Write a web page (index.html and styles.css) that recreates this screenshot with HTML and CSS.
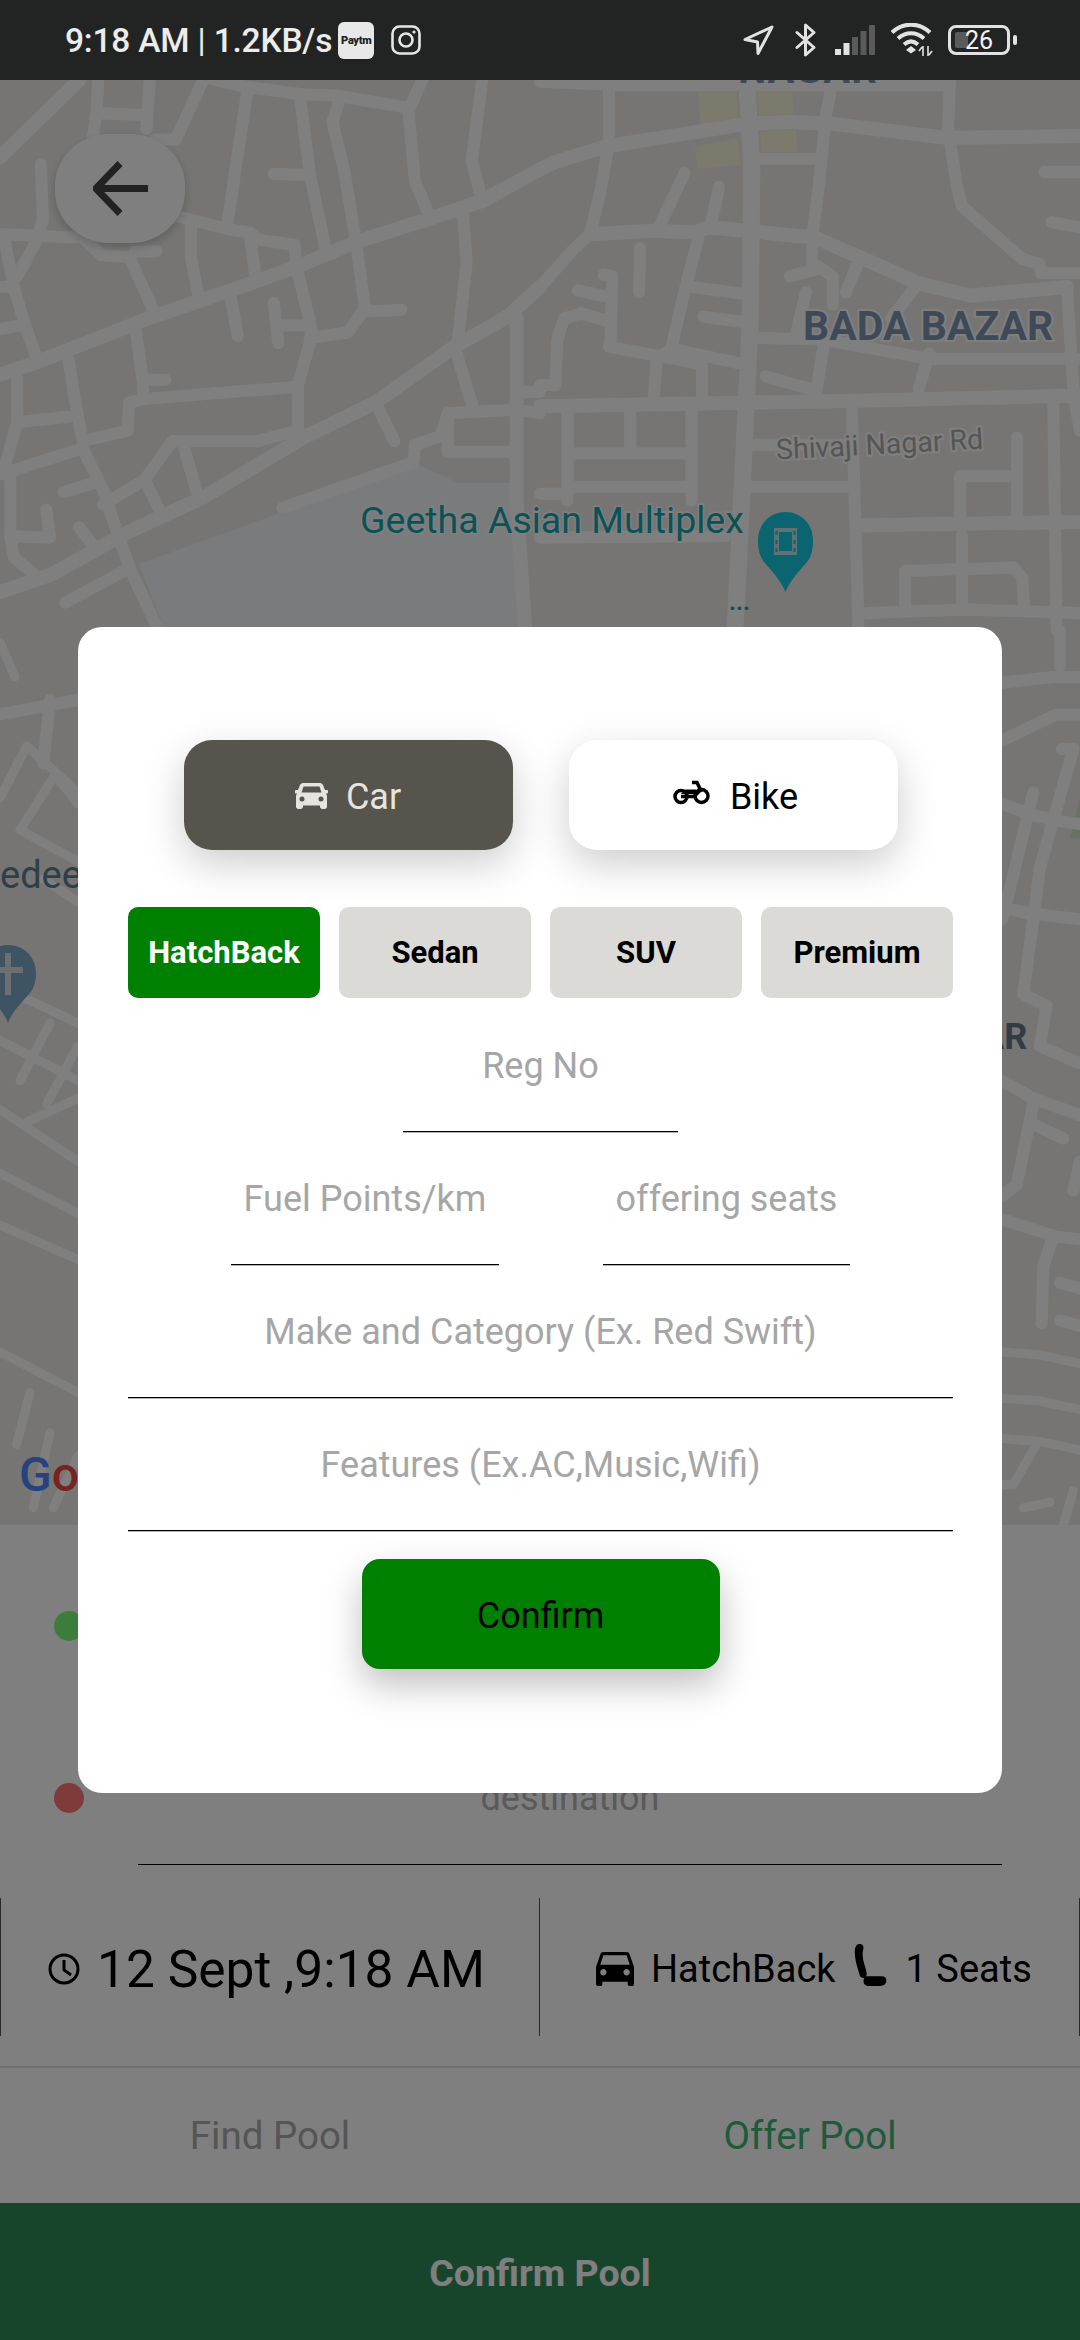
FILE: index.html
```html
<!DOCTYPE html>
<html lang="en">
<head>
<meta charset="utf-8">
<title>Offer Pool</title>
<link rel="stylesheet" href="styles.css">
</head>
<body>
<div class="phone">
  <header class="status">
    <div class="status-left">
      <span class="clock-text">9:18 AM <i>|</i> 1.2KB/s</span>
      <span class="paytm">Paytm</span>
      <svg class="insta" viewBox="0 0 30 30"><rect x="1.5" y="1.5" width="27" height="27" rx="7"/><circle cx="15" cy="15" r="6.5"/><circle class="solid" cx="23" cy="7" r="1.6"/></svg>
    </div>
    <div class="status-right">
      <svg class="si nav" viewBox="0 0 31 30"><path d="M29 2 2 14.500 14.500 17 15 28.500Z"/></svg>
      <svg class="si bt" viewBox="0 0 22 34"><path d="M2 9.500 19 24.500 10.500 32V2L19 9.500 2 24.500"/></svg>
      <svg class="signal" viewBox="0 0 40 30"><rect class="on" x="0" y="24" width="6" height="6"/><rect class="on" x="8.500" y="18" width="6" height="12"/><rect x="17" y="12" width="6" height="18"/><rect x="25.500" y="6" width="6" height="24"/><rect x="34" y="0" width="6" height="30"/></svg>
      <svg class="wifi" viewBox="0 0 44 34"><path d="M2 9.500C13 -1 29 -1 40 9.500M8 15.500C15.500 8.500 26.500 8.500 34 15.500M14 21.500C18.500 17.500 23.500 17.500 28 21.500"/><path class="solid" d="M21 23 26 27 21 30.500 16 27Z"/><path class="arrows" d="M33 23V33M32 24l-3 4M38 33V23M39 32l3-4"/></svg>
      <span class="battery"><span class="battery-fill"></span><span class="battery-num">26</span></span>
    </div>
  </header>

  <section class="map">
    <svg class="roads" viewBox="0 0 1080 1445">
      <polygon class="water" points="139,484 286,431 417,384 458,403 513,403 513,463 520,550 165,550"/>
      <g class="park">
        <polygon points="698,12 736,9 739,46 701,46"/>
        <polygon points="757,7 792,5 794,34 759,36"/>
        <polygon points="760,52 796,50 797,72 762,72"/>
        <polygon points="695,67 738,58 740,85 698,89"/>
        <polygon points="1070,758 1080,718 1080,758"/>
      </g>
      <g transform="scale(.3444 .3507)">
        <polyline class="wide" points="0,840 120,800 430,680 700,590 880,525 1040,460 1280,385 1400,345 1568,255"/>
        <polyline points="600,-5 720,20 870,40 980,45 1190,80 1230,-10"/>
        <polyline points="720,20 660,410"/>
        <polyline points="285,0 280,95 270,160"/>
        <polyline points="435,0 425,140"/><polyline points="280,95 425,100"/>
        <polyline points="590,0 510,170 450,170"/>
        <polyline class="wide" points="230,0 0,220"/>
        <polyline points="870,40 900,270 945,480"/><polyline points="900,270 795,268"/>
        <polyline points="985,60 965,120 1000,260 1030,440 1060,650 1010,720 900,735"/><polyline points="1060,660 1165,655"/>
        <polyline points="1185,80 1205,290 1240,370"/><polyline points="1400,0 1370,230 1395,325"/>
        <polyline points="118,240 125,400 100,470 50,560"/>
        <polyline points="0,440 240,450 295,500 375,505 445,655"/><polyline points="390,490 455,488"/>
        <polyline points="520,390 660,425 725,435 750,455 855,470 860,525"/><polyline points="725,440 740,550"/>
        <polyline points="555,420 555,510 575,610"/>
        <polyline points="860,530 900,690 905,730 865,870 865,1000"/><polyline points="795,635 808,750"/>
        <polyline points="815,700 900,700"/><polyline points="670,620 690,730"/>
        <polyline points="395,720 415,860 415,900"/><polyline points="415,855 480,855"/>
        <polyline points="860,875 415,910 375,920 370,1000 240,1030 215,900 200,800"/>
        <polyline points="50,850 50,975 200,960"/><polyline points="50,975 15,1100"/>
        <polyline points="0,1125 240,1050 300,1170 340,1290 380,1400 460,1568"/>
        <polyline class="wide" points="1568,590 1480,670 1430,700 1320,760 1090,920 880,1020 590,1190 370,1290 150,1410 0,1460"/>
        <polyline points="1320,760 1375,940"/><polyline points="1345,390 1355,520 1330,740"/>
        <polyline points="860,1000 745,1030 500,1030 420,1140 300,1210"/><polyline points="535,1050 570,1170"/>
        <polyline points="420,1140 460,1220"/><polyline points="185,1175 270,1150"/>
        <polyline points="820,1220 1200,1090 1205,1040 1280,1015 1300,950 1500,940 1568,950"/>
        <polyline points="1095,930 1145,1030"/><polyline points="1300,950 1300,1060 1500,1060"/>
        <polyline class="wide" points="1500,680 1500,1200 1525,1568"/>
        <polyline points="0,590 40,590 70,690 105,790"/><polyline points="0,710 60,700"/><polyline points="10,440 40,590"/>
        <polyline points="135,1225 145,1305 30,1300"/><polyline points="30,1130 30,1300 40,1360 100,1410"/>
        <polyline points="230,1275 280,1340"/><polyline points="190,1490 370,1395"/>
        <polyline points="1500,890 1568,890"/>
      </g>
      <g transform="translate(540 0) scale(.3444 .3507)">
        <polyline class="wide" points="0,255 40,235 190,190 600,125 720,120 850,125 1180,165 1568,160"/>
        <polyline class="wider" points="600,0 615,250 610,700 595,1000 570,1500 565,1568"/>
        <polyline points="200,20 200,180 175,320 145,440 100,480 0,590"/>
        <polyline points="0,5 250,15 1190,15"/>
        <polyline points="850,0 830,100 810,300 790,450"/>
        <polyline points="1190,0 1185,140 1210,300 1225,360 1400,510 1450,525 1455,550 1568,550"/>
        <polyline class="wide" points="145,440 330,430 450,435 490,420 600,430 800,450 940,510 1100,580 1250,615 1530,590"/>
        <polyline points="420,265 340,430"/><polyline points="520,305 495,420"/>
        <polyline points="625,225 800,225"/><polyline points="1465,262 1568,262"/><polyline points="1485,405 1568,420"/>
        <polyline points="290,480 288,605"/>
        <polyline points="460,450 420,600 380,770 340,790 330,910"/>
        <polyline points="185,555 210,560 205,740 200,760 470,810 470,920"/>
        <polyline points="110,600 205,620"/>
        <polyline points="0,870 45,870 50,740 70,680 120,665 205,690"/>
        <polyline points="440,590 590,610"/><polyline points="475,675 590,690"/><polyline points="400,770 590,810"/>
        <polyline class="wide" points="0,930 600,920 890,915 1568,900"/>
        <polyline points="790,480 790,520 850,560 850,640"/><polyline points="725,560 800,540"/><polyline points="772,605 745,720"/>
        <polyline points="620,735 820,740 1130,795 1568,795"/><polyline points="825,750 800,900"/><polyline points="655,845 800,885"/>
        <polyline points="1100,880 1130,780"/><polyline points="888,605 920,530"/><polyline points="1090,590 1020,680"/>
        <polyline points="1530,590 1550,900 1568,1000"/>
        <polyline points="80,950 80,1200"/><polyline points="262,950 262,1060"/><polyline points="440,950 440,1200"/>
        <polyline points="80,1065 440,1065"/><polyline points="80,1160 440,1160"/><polyline points="0,1180 80,1180"/>
        <polyline points="905,920 915,1240 925,1568"/><polyline points="600,1040 900,1040"/><polyline points="590,1160 910,1160"/>
        <polyline class="wide" points="920,1270 1568,1260"/><polyline points="1490,910 1500,1568"/>
        <polyline points="1385,1020 1385,1250"/><polyline points="1220,1240 1220,1130 1380,1130"/><polyline points="1225,1300 1225,1490"/>
        <polyline points="1060,1500 1060,1400 1375,1390 1400,1420 1405,1490"/>
        <polyline points="950,1520 1240,1510 1568,1520"/><polyline points="0,1305 540,1300"/>
      </g>
      <g transform="translate(0 545) scale(.3333 .577)">
        <polyline class="thin" points="0,30 45,90"/><polyline points="0,155 234,130"/>
        <polyline points="150,130 130,240"/>
        <polyline class="thin" points="0,300 80,210 234,290"/>
        <polyline class="thin" points="60,355 165,260 234,310"/><polyline class="thin" points="60,355 234,410"/>
        <polyline class="thin" points="130,440 234,480"/>
        <polyline class="thin" points="50,640 234,690"/>
        <polyline class="thin" points="0,720 234,790"/><polyline class="thin" points="60,790 150,690"/>
        <polyline class="thin" points="140,830 234,730"/><polyline class="thin" points="85,860 234,820"/>
        <polyline class="thin" points="0,840 234,930"/><polyline class="thin" points="0,950 234,1020"/><polyline class="thin" points="0,1040 234,1100"/>
        <polyline class="thin" points="0,1260 234,1330"/><polyline class="thin" points="90,1330 50,1420"/>
        <polyline class="thin" points="100,1530 150,1400"/><polyline class="thin" points="160,1530 234,1440"/>
      </g>
      <g transform="translate(990 545) scale(.3333 .577)">
        <polyline points="36,100 190,90 270,90"/><polyline points="210,10 210,70"/>
        <polyline points="36,200 200,155 270,155"/>
        <polyline points="215,215 250,215 150,420 100,640 170,660 150,730 270,760"/>
        <polyline points="36,310 130,330 210,340"/><polyline points="130,290 50,480 36,510"/>
        <polyline points="36,490 120,500 270,510"/><polyline points="210,340 270,345"/>
        <polyline points="36,790 130,820 270,850"/><polyline points="130,830 80,970 36,990"/>
        <polyline points="130,865 220,890"/><polyline points="250,980 270,930"/>
        <polyline points="36,1030 200,1060 270,1065"/><polyline points="190,1060 160,1110 155,1210"/>
        <polyline points="210,1140 270,1150"/><polyline points="210,1205 270,1215"/>
        <polyline class="thin" points="36,1260 150,1265 270,1280"/><polyline class="thin" points="36,1340 150,1345 270,1360"/>
        <polyline class="thin" points="36,1410 150,1415 270,1430"/><polyline class="thin" points="140,1420 70,1490 36,1490"/>
        <polyline class="thin" points="100,1530 180,1520"/><polyline class="thin" points="250,1500 220,1560"/>
      </g>
    </svg>

    <span class="label label-top">NAGAR</span>
    <span class="label label-bada">BADA BAZAR</span>
    <span class="label label-bada-2">AR</span>
    <span class="label label-road">Shivaji Nagar Rd</span>
    <span class="label label-poi">Geetha Asian Multiplex</span>
    <span class="label label-dots">...</span>
    <span class="label label-edee">edee</span>
    <span class="label label-google"><b class="g-blue">G</b><b class="g-red">o</b><b class="g-yellow">o</b></span>
    <svg class="pin pin-film" viewBox="0 0 55 80"><path class="pin-body" d="M27.500 80 C24 70 13 58 6 50 C2 45 0 38 0 28 C0 12 12 0 27.500 0 C43 0 55 12 55 28 C55 38 53 45 49 50 C42 58 31 70 27.500 80Z"/><path class="pin-mark" fill-rule="evenodd" d="M16 16H39V43H16ZM21 20V39H34V20ZM17.500 19V23H19.500V19ZM35.500 19V23H37.500V19ZM17.500 28V32H19.500V28ZM35.500 28V32H37.500V28ZM17.500 36V40H19.500V36ZM35.500 36V40H37.500V36Z"/></svg>
    <svg class="pin pin-church" viewBox="0 0 56 78"><path class="pin-body-dark" d="M28 78 C25 68 13 56 6 48 C2 43 0 36 0 28 C0 12 12 0 28 0 C44 0 56 12 56 28 C56 36 54 43 50 48 C43 56 31 68 28 78Z"/><path class="pin-cross" d="M25 8H31V22H43V28H31V50H25V28H13V22H25Z"/></svg>

    <button class="back" type="button" aria-label="Back">
      <svg viewBox="0 0 55 55"><path d="M27 2.500 3 27.500 27 52.500M3 27.500H55"/></svg>
    </button>
  </section>

  <section class="sheet">
    <div class="place place-first">
      <span class="dot dot-green"></span>
      <div class="place-field">source</div>
    </div>
    <div class="place">
      <span class="dot dot-red"></span>
      <div class="place-field">destination</div>
    </div>
    <div class="info">
      <div class="cell cell-time">
        <svg class="clock" viewBox="0 0 32 34"><circle cx="16" cy="17" r="14"/><path d="M16 8V18L23 23"/></svg>
        <span>12 Sept ,9:18 AM</span>
      </div>
      <div class="cell cell-ride">
        <svg class="car-solid" viewBox="3 5 18 16" preserveAspectRatio="none"><path d="M18.920 6.010C18.720 5.420 18.160 5 17.500 5h-11c-.66 0-1.210.42-1.420 1.010L3 12v8c0 .55.45 1 1 1h1c.55 0 1-.45 1-1v-1h12v1c0 .55.45 1 1 1h1c.55 0 1-.45 1-1v-8l-2.080-5.990zM6.500 16c-.83 0-1.500-.67-1.500-1.500S5.670 13 6.500 13s1.500.67 1.500 1.500S7.330 16 6.500 16zm11 0c-.83 0-1.500-.67-1.500-1.500s.67-1.500 1.500-1.500 1.500.67 1.500 1.500-.67 1.500-1.500 1.500zM5 11l1.500-4.500h11L19 11H5z"/></svg>
        <span>HatchBack</span>
        <svg class="seat" viewBox="870 128 105 132"><path d="M885 132C878 135 874 145 876 165C878 190 885 205 890 225C893 235 905 235 910 228C915 215 900 190 899 165C898 150 904 145 900 136C897 130 890 130 885 132Z"/><path d="M912 228H955C965 228 970 232 970 240C970 250 965 257 950 257H918C905 257 900 248 902 238C903 232 906 228 912 228Z"/></svg>
        <span>1 Seats</span>
      </div>
    </div>
    <nav class="tabs">
      <span class="tab">Find Pool</span>
      <span class="tab tab-active">Offer Pool</span>
    </nav>
    <div class="confirm-bar">Confirm Pool</div>
  </section>

  <div class="overlay"></div>

  <div class="modal">
    <div class="toggle">
      <div class="toggle-btn toggle-on">
        <svg class="car-icon" viewBox="0 0 33 27"><path fill-rule="evenodd" d="M8 1H25C26.500 1 27.500 2 28 3L30 8H32C32.600 8 33 8.500 33 9V10.500C33 11 32.600 11.500 32 11.500H30.800C31.600 12.300 32 13.300 32 14.500V24.500C32 25.800 31 27 29.500 27H27.500C26 27 25 25.800 25 24.500V23.500H8V24.500C8 25.800 7 27 5.500 27H3.500C2 27 1 25.800 1 24.500V14.500C1 13.300 1.400 12.300 2.200 11.500H1C.4 11.500 0 11 0 10.500V9C0 8.500 .4 8 1 8H3L5 3C5.500 2 6.500 1 8 1ZM8.500 4.500 6.500 10.500H26.500L24.500 4.500ZM7 14.500A2.500 2.500 0 1 0 7 19.500A2.500 2.500 0 1 0 7 14.500ZM26 14.500A2.500 2.500 0 1 0 26 19.500A2.500 2.500 0 1 0 26 14.500Z"/></svg>
        <span>Car</span>
      </div>
      <div class="toggle-btn toggle-bike">
        <svg class="bike-icon" viewBox="0 0 37 25"><circle cx="8" cy="16.500" r="6"/><circle cx="28.500" cy="16" r="6.500"/><path d="M8 16.500H21L28.500 9M19 2.500H24L28.500 12"/><path d="M12 9.500H23V14H8Z" class="fill"/></svg>
        <span>Bike</span>
      </div>
    </div>

    <div class="chips">
      <div class="chip chip-on">HatchBack</div>
      <div class="chip">Sedan</div>
      <div class="chip">SUV</div>
      <div class="chip">Premium</div>
    </div>

    <div class="field field-reg">Reg No</div>
    <div class="field-row">
      <div class="field field-fuel">Fuel Points/km</div>
      <div class="field field-seats">offering seats</div>
    </div>
    <div class="field">Make and Category (Ex. Red Swift)</div>
    <div class="field">Features (Ex.AC,Music,Wifi)</div>

    <div class="modal-confirm">Confirm</div>
  </div>
</div>
</body>
</html>
```
FILE: styles.css
```css
* { box-sizing: border-box; }
html, body { margin: 0; padding: 0; }
body { font-family: Roboto, "Liberation Sans", sans-serif; background: #fff; }

.phone {
  position: relative;
  width: 1080px;
  height: 2340px;
  overflow: hidden;
  display: flex;
  flex-direction: column;
}

/* status bar */
.status {
  position: relative;
  z-index: 3;
  flex: 0 0 80px;
  background: #222423;
  color: #ececec;
  display: flex;
  align-items: center;
  justify-content: space-between;
  padding: 0 64px 0 65px;
}
.status-left, .status-right { display: flex; align-items: center; }
.clock-text { font-size: 33.500px; font-weight: 500; white-space: nowrap; margin-right: 6px; letter-spacing: -.2px; }
.clock-text i { font-style: normal; font-weight: 400; }
.paytm {
  width: 36px; height: 37px;
  border-radius: 6px;
  background: #e8e8e8;
  color: #222;
  font-size: 11px;
  font-weight: 900;
  letter-spacing: -.3px;
  display: flex; align-items: center; justify-content: center;
  margin-right: 17px;
}
.insta { width: 30px; height: 30px; fill: none; stroke: #e6e6e6; stroke-width: 2.6; }
.insta .solid { fill: #e6e6e6; stroke: none; }
.si { fill: none; stroke: #e2e2e2; stroke-width: 3; stroke-linejoin: round; stroke-linecap: round; }
.nav { width: 31px; height: 30px; margin-right: 21px; }
.bt { width: 22px; height: 34px; margin-right: 18px; }
.signal { width: 40px; height: 30px; margin-right: 15px; fill: #5a5a5a; }
.signal .on { fill: #e2e2e2; }
.wifi { width: 44px; height: 34px; margin-right: 14px; fill: none; stroke: #e2e2e2; stroke-width: 4; }
.wifi .solid { fill: #e2e2e2; stroke: none; }
.wifi .arrows { stroke-width: 1.6; }
.battery {
  position: relative;
  width: 62px; height: 30px;
  border: 3px solid #e2e2e2;
  border-radius: 8px;
  display: flex; align-items: center; justify-content: center;
  margin-right: 6px;
}
.battery::after {
  content: "";
  position: absolute;
  right: -10px; top: 7px;
  width: 4px; height: 10px;
  border-radius: 2px;
  background: #e2e2e2;
}
.battery-fill { position: absolute; left: 4px; top: 4px; bottom: 4px; width: 13px; background: #595a5a; border-radius: 2px; }
.battery-num { position: relative; font-size: 25px; color: #f2f2f2; line-height: 1; }

/* map */
.map { position: relative; flex: 0 0 1445px; background: #ecebe8; overflow: hidden; }
.roads {
  position: absolute;
  left: 0; top: 0;
  width: 1080px; height: 1445px;
  fill: none;
  stroke: #fff;
  stroke-width: 12;
  stroke-linecap: round;
  stroke-linejoin: round;
}
.roads polyline { vector-effect: non-scaling-stroke; }
.roads .wide { stroke-width: 14; }
.roads .wider { stroke-width: 17; }
.roads .thin { stroke-width: 9; }
.roads .water { fill: #f4f6fa; stroke: none; }
.roads .park { fill: #f6f4d8; stroke: none; }
.roads .park polygon:last-child { fill: #cfe3c8; }

.label { position: absolute; white-space: nowrap; line-height: 1; }
.label-top { left: 738px; top: -30px; font-size: 40px; font-weight: 700; color: #7e94b2; letter-spacing: 1px; }
.label-bada { left: 803px; top: 226px; font-size: 41px; font-weight: 700; color: #7e94b2; -webkit-text-stroke: 4px #fff; paint-order: stroke fill; }
.label-bada-2 { left: 980px; top: 939px; font-size: 36px; font-weight: 700; color: #64798f; }
.label-road { left: 776px; top: 351px; font-size: 28.500px; color: #aaa; transform: rotate(-3deg); -webkit-text-stroke: 4px #fff; paint-order: stroke fill; }
.label-poi { left: 360px; top: 422px; font-size: 37.500px; color: #14a4ae; -webkit-text-stroke: 3px #fff; paint-order: stroke fill; }
.label-dots { left: 729px; top: 510px; font-size: 24px; font-weight: 700; color: #14a4ae; }
.label-edee { left: 0; top: 776px; font-size: 38px; color: #5f7f90; }
.label-google { left: 19px; top: 1371px; font-size: 48px; font-weight: 500; }
.label-google b { font-weight: 500; }
.g-blue { color: #4f86ff; }
.g-red { color: #f0483c; }
.g-yellow { color: #fbbc05; }

.pin { position: absolute; }
.pin-film { left: 758px; top: 432px; width: 55px; height: 80px; }
.pin-body { fill: #16cae0; }
.pin-mark { fill: #b8e4ea; }
.pin-church { left: -20px; top: 865px; width: 56px; height: 78px; }
.pin-body-dark { fill: #7fa8c4; }
.pin-cross { fill: #d6dee2; }

.back {
  position: absolute;
  left: 55px; top: 54px;
  width: 130px; height: 109px;
  padding: 0;
  border: 0;
  border-radius: 54px / 52px;
  background: #fff;
  box-shadow: 0 4px 10px rgba(0,0,0,.18);
  display: flex; align-items: center; justify-content: center;
}
.back svg { width: 55px; height: 55px; fill: none; stroke: #444; stroke-width: 7; }

/* bottom sheet */
.sheet { flex: 1; background: #fff; display: flex; flex-direction: column; min-height: 0; }
.place {
  flex: 0 0 172px;
  display: flex;
  align-items: flex-end;
  padding-left: 54px;
}
.place-first { flex-basis: 168px; }
.dot { flex: 0 0 30px; height: 30px; border-radius: 50%; margin-bottom: 52px; margin-right: 54px; }
.dot-green { background: #79fa79; }
.dot-red { background: #ff7474; }
.place-field {
  flex: 1;
  margin-right: 78px;
  border-bottom: 1px solid #000;
  text-align: center;
  color: #b4b4b4;
  font-size: 36px;
  line-height: 40px;
  padding-bottom: 46px;
}
.info {
  flex: 0 0 138px;
  margin-top: 33px;
  display: flex;
  border-left: 1px solid #555;
  border-right: 1px solid #555;
}
.cell { display: flex; align-items: center; color: #000; padding-top: 4px; }
.cell-time { flex: 0 0 538px; padding-left: 47px; font-size: 51.500px; }
.cell-ride { flex: 1; border-left: 1px solid #555; padding-left: 56px; font-size: 38px; }
.clock { width: 32px; height: 34px; margin-right: 17px; fill: none; stroke: #000; stroke-width: 3; }
.car-solid { width: 38px; height: 34px; fill: #000; margin-right: 17px; }
.seat { width: 35px; height: 44px; fill: #000; margin: -8px 18px 0 17px; }

.tabs {
  flex: 0 0 137px;
  margin-top: 30px;
  border-top: 2px solid #dedede;
  display: grid;
  grid-template-columns: 1fr 1fr;
  align-items: center;
  justify-items: center;
  font-size: 38.500px;
}
.tab { color: #aaa; }
.tab-active { color: #3eb474; }
.confirm-bar {
  flex: 0 0 137px;
  background: #2e8a58;
  color: #fff;
  font-size: 37.500px;
  font-weight: 700;
  padding-top: 3px;
  display: flex; align-items: center; justify-content: center;
}

.overlay { position: absolute; inset: 0; z-index: 1; background: rgba(0,0,0,.5); }

/* modal */
.modal {
  position: absolute;
  z-index: 2;
  left: 78px; top: 627px;
  width: 924px; height: 1166px;
  background: #fff;
  border-radius: 24px;
  padding: 113px 49px 0 50px;
}
.toggle { display: flex; justify-content: center; gap: 56px; }
.toggle-btn {
  flex: 0 0 329px;
  height: 110px;
  padding-top: 3px;
  border-radius: 28px;
  background: #fff;
  color: #000;
  box-shadow: 0 14px 40px rgba(0,0,0,.2);
  display: flex; align-items: center; justify-content: center;
  font-size: 36px;
}
.toggle-on { background: #57544d; color: #e6e4df; }
.toggle-bike { padding-left: 5px; }
.car-icon { width: 33px; height: 27px; fill: #e6e4df; margin: -3px 18px 0 0; }
.bike-icon { width: 37px; height: 25px; fill: none; stroke: #000; stroke-width: 3.500; margin: -9px 20px 0 0; }
.bike-icon .fill { fill: #000; stroke: none; }

.chips { display: grid; grid-template-columns: repeat(4, 1fr); gap: 19px; margin: 57px 0 1px; }
.chip {
  height: 91px;
  border-radius: 10px;
  background: #dcdad6;
  color: #000;
  font-size: 31px;
  font-weight: 700;
  display: flex; align-items: center; justify-content: center;
}
.chip-on { background: #008000; color: #fff; }

.field {
  height: 133px;
  border-bottom: 1px solid #000;
  box-shadow: 0 1px 0 rgba(0,0,0,.3);
  padding-top: 47px;
  text-align: center;
  color: #a6a6a6;
  font-size: 36px;
  line-height: 40px;
}
.field-reg { width: 275px; margin: 0 auto; }
.field-row { display: flex; justify-content: center; gap: 104px; }
.field-fuel { width: 268px; }
.field-seats { width: 247px; }

.modal-confirm {
  width: 358px;
  height: 110px;
  margin: 28px auto 0;
  padding-top: 3px;
  border-radius: 18px;
  background: #008000;
  color: #000;
  font-size: 36px;
  box-shadow: 0 16px 36px rgba(0,0,0,.25);
  display: flex; align-items: center; justify-content: center;
}
```
